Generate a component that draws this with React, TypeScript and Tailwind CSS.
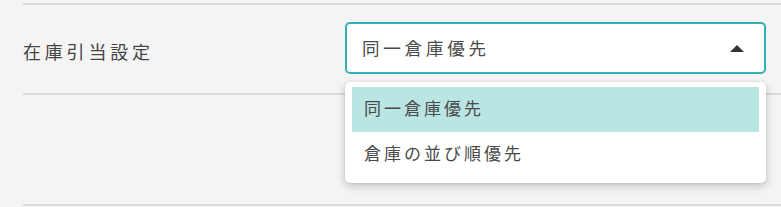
import React from "react";

const font = { fontFamily: '"Noto Sans CJK JP", "Noto Sans", sans-serif' };

export default function App() {
  return (
    <div className="w-[781px] h-[207px] bg-[#f4f4f4] overflow-hidden" style={font}>
      <div className="pl-[23px] pt-[3px]">
        <div className="h-[2px] bg-[#dadada]" />
        <div className="h-[88px] flex items-start">
          <div className="w-[322px] pt-[34px] text-[18px] leading-[24px] tracking-[3.8px] text-[#444]">
            在庫引当設定
          </div>
          <div className="relative mt-[17px]">
            <div className="w-[421px] h-[52px] rounded-[5px] border-2 border-[#2db3b3] bg-white flex items-center pl-[15px] pr-[18px]">
              <span className="flex-1 text-[17.5px] tracking-[3.8px] text-[#4a4a4a]">同一倉庫優先</span>
              <svg width="14" height="7" viewBox="0 0 14 7" className="mr-[2px]">
                <path d="M0 7 L7 0 L14 7 Z" fill="#333" />
              </svg>
            </div>
            <div className="absolute left-0 top-[60px] w-[421px] bg-white rounded-[5px] shadow-[0_3px_8px_rgba(0,0,0,0.22),0_0_2px_rgba(0,0,0,0.1)] pt-[5px] pb-[6px] px-[7px] z-10">
              <div className="h-[45px] bg-[#b9e5e3] flex items-center pl-[12px] pb-[3px] text-[17px] tracking-[3px] text-[#4a4a4a]">
                同一倉庫優先
              </div>
              <div className="h-[45px] flex items-center pl-[12px] pb-[3px] text-[17px] tracking-[3px] text-[#4a4a4a]">
                倉庫の並び順優先
              </div>
            </div>
          </div>
        </div>
        <div className="h-[2px] bg-[#dadada]" />
        <div className="h-[109px]" />
        <div className="h-[2px] bg-[#dadada]" />
      </div>
    </div>
  );
}
